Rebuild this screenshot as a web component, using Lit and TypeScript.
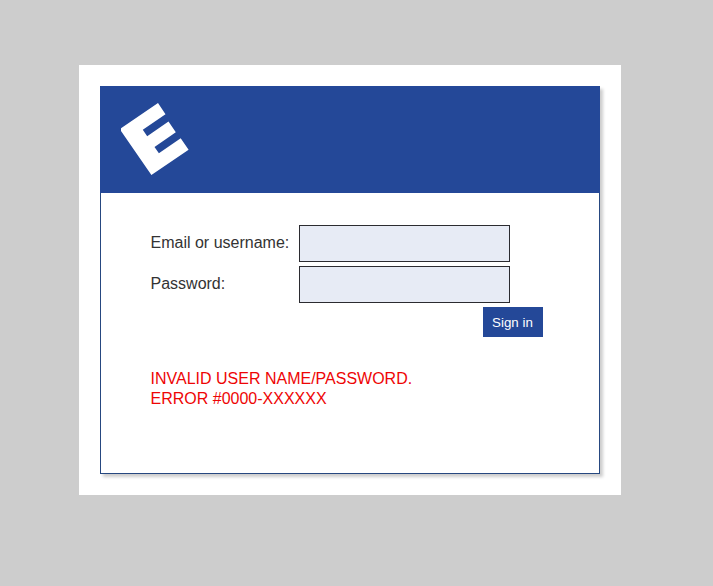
import { LitElement, html, css } from "lit";
import { customElement, property } from "lit/decorators.js";

@customElement("brand-mark")
class BrandMark extends LitElement {
  static styles = css`
    :host { display: block; width: 68px; height: 72px; }
    .mark { display: block; }
  `;
  render() {
    return html`<svg class="mark" width="68" height="72" viewBox="0 0 68 72" role="img" aria-label="E">
      <path fill="#fff" d="M37 0L44.5 11.3L21.8 26.7L26.2 33.2L47.5 18.5L54.8 29.3L33.5 44L37.9 50.3L59.7 35.2L67.6 46.7L30.4 72L0 28V25.3Z" />
    </svg>`;
  }
}

@customElement("app-root")
class AppRoot extends LitElement {
  @property() errorTitle = "INVALID USER NAME/PASSWORD.";
  @property() errorCode = "ERROR #0000-XXXXXX";

  static styles = css`
    :host {
      display: block;
      box-sizing: border-box;
      height: 586px;
      padding: 65px 92px 0 79px;
      background: #cdcdcd;
      font: 16px/20px "Liberation Sans", Arial, sans-serif;
      color: #333;
    }
    .frame {
      box-sizing: border-box;
      height: 430px;
      padding: 21px;
      background: #fff;
    }
    .card {
      box-sizing: border-box;
      height: 388px;
      border: 1px solid #264880;
      border-top-color: #244898;
      box-shadow: 3px 3px 3px rgba(0, 0, 0, 0.2);
      background: #fff;
    }
    .header {
      box-sizing: border-box;
      height: 106px;
      margin: 0 -1px;
      padding: 16px 21px;
      background: #244898;
    }
    .form {
      display: grid;
      grid-template-columns: 148.5px 211px;
      row-gap: 4px;
      padding: 32px 0 0 49.5px;
      align-items: center;
    }
    .label { padding-bottom: 2px; }
    .field {
      box-sizing: border-box;
      width: 211px;
      height: 37px;
      margin: 0;
      padding: 0 8px;
      border: 1px solid #2b2b30;
      border-radius: 0;
      background: #e7ebf5;
      font: inherit;
      outline: none;
    }
    .submit {
      grid-column: 2;
      width: 60px;
      height: 30px;
      margin: 0 0 0 184px;
      padding: 0 1px 0 0;
      border: 0;
      background: #244898;
      color: #fff;
      font: 13.33px "Liberation Sans", Arial, sans-serif;
    }
    .error { margin: 32px 0 0 49.5px; color: #ee0505; }
  `;

  render() {
    return html`
      <main class="frame">
        <section class="card">
          <header class="header"><brand-mark></brand-mark></header>
          <form class="form">
            <label class="label" for="user">Email or username:</label>
            <input class="field" id="user" type="text" />
            <label class="label" for="pass">Password:</label>
            <input class="field" id="pass" type="password" />
            <button class="submit" type="button">Sign in</button>
          </form>
          <div class="error" role="alert">${this.errorTitle}<br />${this.errorCode}</div>
        </section>
      </main>
    `;
  }
}
